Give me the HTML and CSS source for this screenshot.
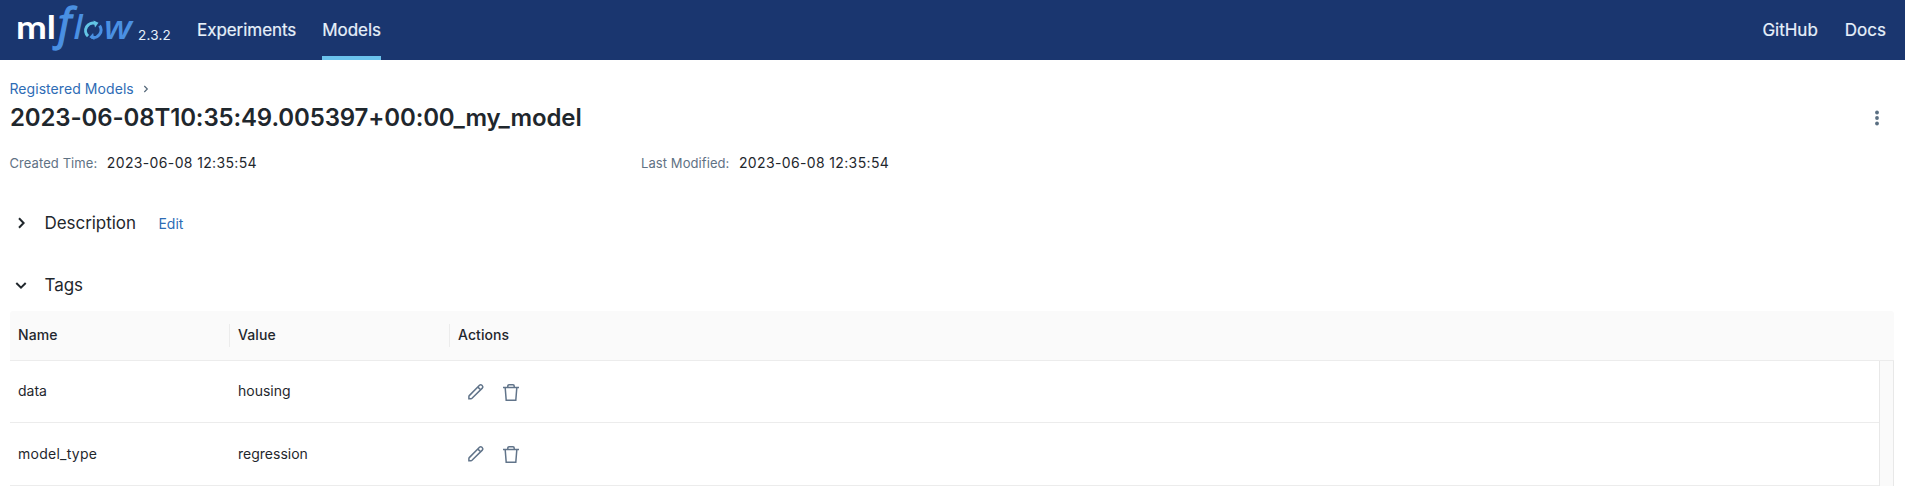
FILE: index.html
```html
<!DOCTYPE html>
<html lang="en">
<head>
<meta charset="utf-8">
<title>MLflow</title>
<link rel="stylesheet" href="styles.css">
</head>
<body>
<svg class="defs" width="0" height="0" aria-hidden="true">
  <symbol id="pencil" viewBox="0 0 18 18"><path d="M12.5 2.3a1.7 1.7 0 0 1 2.4 0l.4.4a1.7 1.7 0 0 1 0 2.4L5 15.3a1.5 1.5 0 0 1-1 .4H1.9v-2a1.5 1.5 0 0 1 .4-1.1zM10.9 4.1l2.7 2.7"/></symbol>
  <symbol id="trash" viewBox="0 0 18 18"><path d="M1 4.6h16M5.8 4.4V2.9a1.2 1.2 0 0 1 1.2-1.2h4a1.2 1.2 0 0 1 1.2 1.2v1.5M3.2 4.8l1 12.5h9.6l1-12.5"/></symbol>
</svg>
<header class="topbar">
  <svg class="logo" width="120" height="60" viewBox="0 0 120 60">
    <text class="logo-ml" x="0" y="39" textLength="40" lengthAdjust="spacingAndGlyphs">ml</text>
    <text class="logo-f" x="42" y="39">f</text>
    <text class="logo-l" x="57.5" y="39">l</text>
    <g class="logo-ring"><path class="ring-light" d="M72 36.2A7.6 7.6 0 0 1 79.5 23.4"/><path d="M83.6 25.6A7.6 7.6 0 0 1 75.5 37.3"/></g>
    <path class="tip-light" d="M77.5 20.5l5 2.3-3.5 4.7z"/><path class="tip-blue" d="M78.5 40l-5.2-2.7 3.8-4.2z"/>
    <text class="logo-w" x="88" y="39" textLength="28" lengthAdjust="spacingAndGlyphs">w</text>
  </svg>
  <span class="version">2.3.2</span>
  <nav class="nav"><a class="experiments">Experiments</a><a class="active">Models</a></nav>
  <nav class="links"><a class="github">GitHub</a><a class="docs">Docs</a></nav>
</header>
<main class="page">
  <div class="crumbs"><a class="link">Registered Models</a><svg width="6" height="8" viewBox="0 0 6 8"><path d="M1.3 1l3 3-3 3"/></svg></div>
  <div class="title-row">
    <h1>2023-06-08T10:35:49.005397+00:00_my_model</h1>
    <svg class="more" width="4" height="16" viewBox="0 0 4 16"><circle cx="2" cy="2.5" r="1.9"/><circle cx="2" cy="8" r="1.9"/><circle cx="2" cy="13.5" r="1.9"/></svg>
  </div>
  <div class="meta">
    <div><span class="label">Created Time:</span><span class="date">2023-06-08 12:35:54</span></div>
    <div><span class="label">Last Modified:</span><span class="date">2023-06-08 12:35:54</span></div>
  </div>
  <section class="section"><svg class="chevron" width="12" height="12" viewBox="0 0 12 12"><path d="M4 1.3l4.6 4.7L4 10.7"/></svg><h2>Description</h2><a class="link edit">Edit</a></section>
  <section class="section"><svg class="chevron" width="12" height="12" viewBox="0 0 12 12"><path d="M1.3 4L6 8.6 10.7 4"/></svg><h2>Tags</h2></section>
  <div class="table">
    <div class="row head"><span>Name</span><span>Value</span><span>Actions</span></div>
    <div class="body">
      <div class="rows">
        <div class="row"><span>data</span><span>housing</span><span class="actions"><svg width="18" height="18"><use href="#pencil"/></svg><svg width="18" height="18"><use href="#trash"/></svg></span></div>
        <div class="row last"><span class="key">model_type</span><span>regression</span><span class="actions"><svg width="18" height="18"><use href="#pencil"/></svg><svg width="18" height="18"><use href="#trash"/></svg></span></div>
      </div>
      <div class="gutter"></div>
    </div>
  </div>
</main>
</body>
</html>
```
FILE: styles.css
```css
* { box-sizing: border-box; }
body { margin: 0; background: #fff; color: #1f272d; font: 14px/20px Inter, "Liberation Sans", sans-serif; white-space: nowrap; }
.defs { position: absolute; }
h1, h2 { margin: 0; }
.topbar { display: flex; height: 60px; background: #1a366f; color: #e7f1fb; padding: 0 19px 0 16px; }
.logo { flex: none; overflow: visible; }
.logo-ml { font: bold 33px/1 Lato, sans-serif; fill: #fff; }
.logo-f { font: italic 43px/1 "Open Sans", sans-serif; fill: #4a90e2; stroke: #4a90e2; stroke-width: 1.3; }
.logo-l { font: italic 600 33px/1 "Open Sans", sans-serif; fill: #4a90e2; }
.logo-w { font: italic 600 33px/1 "Open Sans", sans-serif; fill: #4a90e2; }
.logo-ring { fill: none; stroke: #4a90e2; stroke-width: 3; }
.logo-ring .ring-light { stroke: #63c5e5; }
.tip-light { fill: #63c5e5; }
.tip-blue { fill: #4a90e2; }
.version { padding: 25px 0 0 2px; font-size: 13.5px; width: 61px; letter-spacing: .2px; }
.nav, .links { display: flex; font-size: 17px; line-height: 60px; }
.nav { gap: 26px; letter-spacing: -.05px; -webkit-text-stroke: .2px; }
.links { gap: 27px; margin-left: auto; -webkit-text-stroke: .2px; }
.active { border-bottom: 4px solid #6bc3ed; }
.page { padding: 19px 10px 0; }
.crumbs { display: flex; align-items: center; gap: 9px; height: 20px; letter-spacing: .07px; margin-left: -.6px; }
.crumbs path { fill: none; stroke: #55687a; stroke-width: 1.2; }
.link { color: #2e6cb5; }
.title-row { display: flex; justify-content: space-between; align-items: center; height: 32px; margin-top: 3px; padding-right: 16px; }
h1 { font-size: 24px; font-weight: 600; line-height: 32px; letter-spacing: -.13px; }
.more { fill: #5a6f82; }
.meta { display: grid; grid-template-columns: 631.5px 1fr; margin: 19px 0 0 -.5px; }
.meta > div { display: flex; gap: 9.5px; }
.label { color: #5f7284; font-size: 13px; letter-spacing: .08px; }
.date { letter-spacing: .36px; }
.section { display: flex; align-items: center; height: 24px; margin-top: 38px; padding-left: 5px; }
.chevron { margin-right: 17.5px; fill: none; stroke: #20272c; stroke-width: 2; }
h2 { font-size: 17px; font-weight: 400; letter-spacing: -.05px; }
.edit { margin-left: 22.5px; padding-top: 2px; }
.table { width: 1884px; margin-top: 14px; }
.row { display: grid; grid-template-columns: 220px 220px 1fr; height: 62px; line-height: 60px; border-bottom: 1px solid #ececec; }
.row > span { padding-left: 8px; }
.row.last { height: 63px; line-height: 62px; }
.row.head { height: 50px; padding: 13px 0; line-height: 21px; background: #fafafa; border-radius: 3px 3px 0 0; font-weight: 500; letter-spacing: .08px; }
.head > span + span { border-left: 1px solid #ececec; margin-left: -1px; }
.key { letter-spacing: .25px; }
.body { display: flex; }
.rows { width: 1869px; }
.gutter { flex: 1; background: #fafafa; border: solid #e8e8e8; border-width: 0 1px; }
.row > .actions { display: flex; align-items: center; gap: 17px; padding: 1px 0 0 17px; }
.last > .actions { padding-top: 0; padding-bottom: 1px; }
.actions svg { fill: none; stroke: #61748a; stroke-width: 1.5; }
```
